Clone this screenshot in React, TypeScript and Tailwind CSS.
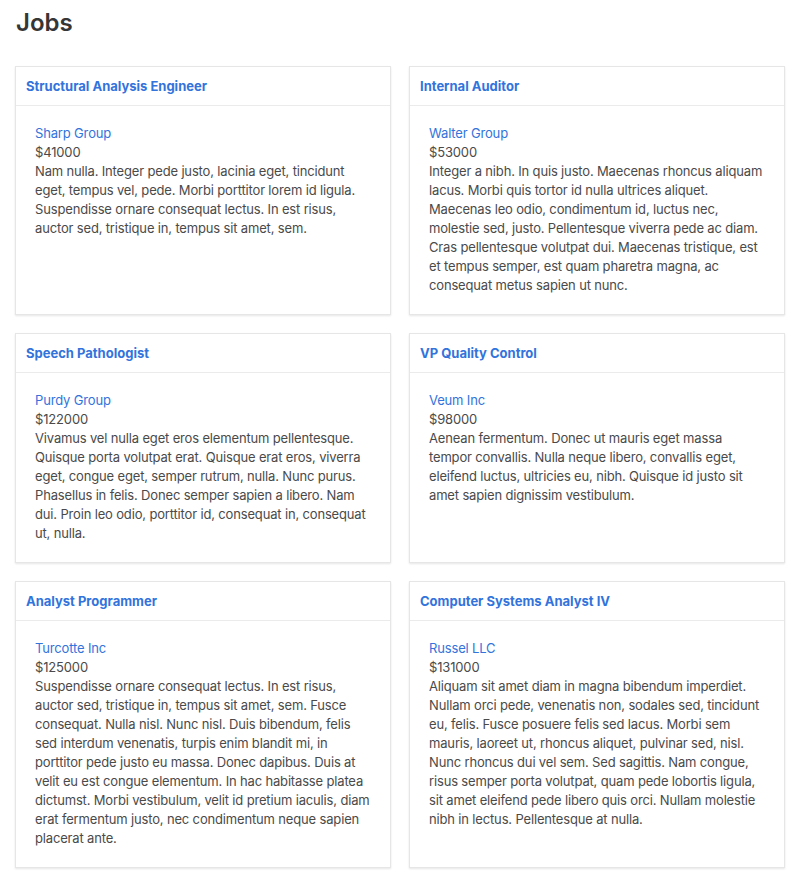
const jobs = [
  {
    title: "Structural Analysis Engineer",
    company: "Sharp Group",
    salary: 41000,
    description:
      "Nam nulla. Integer pede justo, lacinia eget, tincidunt eget, tempus vel, pede. Morbi porttitor lorem id ligula. Suspendisse ornare consequat lectus. In est risus, auctor sed, tristique in, tempus sit amet, sem.",
  },
  {
    title: "Internal Auditor",
    company: "Walter Group",
    salary: 53000,
    description:
      "Integer a nibh. In quis justo. Maecenas rhoncus aliquam lacus. Morbi quis tortor id nulla ultrices aliquet. Maecenas leo odio, condimentum id, luctus nec, molestie sed, justo. Pellentesque viverra pede ac diam. Cras pellentesque volutpat dui. Maecenas tristique, est et tempus semper, est quam pharetra magna, ac consequat metus sapien ut nunc.",
  },
  {
    title: "Speech Pathologist",
    company: "Purdy Group",
    salary: 122000,
    description:
      "Vivamus vel nulla eget eros elementum pellentesque. Quisque porta volutpat erat. Quisque erat eros, viverra eget, congue eget, semper rutrum, nulla. Nunc purus. Phasellus in felis. Donec semper sapien a libero. Nam dui. Proin leo odio, porttitor id, consequat in, consequat ut, nulla.",
  },
  {
    title: "VP Quality Control",
    company: "Veum Inc",
    salary: 98000,
    description:
      "Aenean fermentum. Donec ut mauris eget massa tempor convallis. Nulla neque libero, convallis eget, eleifend luctus, ultricies eu, nibh. Quisque id justo sit amet sapien dignissim vestibulum.",
  },
  {
    title: "Analyst Programmer",
    company: "Turcotte Inc",
    salary: 125000,
    description:
      "Suspendisse ornare consequat lectus. In est risus, auctor sed, tristique in, tempus sit amet, sem. Fusce consequat. Nulla nisl. Nunc nisl. Duis bibendum, felis sed interdum venenatis, turpis enim blandit mi, in porttitor pede justo eu massa. Donec dapibus. Duis at velit eu est congue elementum. In hac habitasse platea dictumst. Morbi vestibulum, velit id pretium iaculis, diam erat fermentum justo, nec condimentum neque sapien placerat ante.",
  },
  {
    title: "Computer Systems Analyst IV",
    company: "Russel LLC",
    salary: 131000,
    description:
      "Aliquam sit amet diam in magna bibendum imperdiet. Nullam orci pede, venenatis non, sodales sed, tincidunt eu, felis. Fusce posuere felis sed lacus. Morbi sem mauris, laoreet ut, rhoncus aliquet, pulvinar sed, nisl. Nunc rhoncus dui vel sem. Sed sagittis. Nam congue, risus semper porta volutpat, quam pede lobortis ligula, sit amet eleifend pede libero quis orci. Nullam molestie nibh in lectus. Pellentesque at nulla.",
  },
];

export default function App() {
  return (
    <div className="min-h-screen bg-white font-['Inter',sans-serif] text-[#4a4a4a] pl-[15px] pr-[10px] pt-[7px] pb-4">
      {/* Page title */}
      <h1 className="text-[24px] leading-[32px] font-semibold text-[#363636] pl-px">Jobs</h1>

      {/* Job cards */}
      <div className="mt-[27px] grid grid-cols-[376px_376px] gap-x-[18px] gap-y-[18px]">
        {jobs.map((job) => (
          <div
            key={job.title}
            className="flex flex-col border border-[#e6e6e6] bg-white shadow-[0_1px_2px_rgba(10,10,10,0.1)]"
          >
            <div className="h-[39px] flex items-center px-[10px] border-b border-[#ebebeb]">
              <a href="#" className="text-[13px] font-bold text-[#3273dc] leading-none">
                {job.title}
              </a>
            </div>
            <div className="pt-[18px] pb-[19px] px-[19px] text-[13px] leading-[19px] tracking-[-0.16px]">
              <a href="#" className="block text-[#3273dc]">{job.company}</a>
              <p>${job.salary}</p>
              <p>{job.description}</p>
            </div>
          </div>
        ))}
      </div>
    </div>
  );
}
